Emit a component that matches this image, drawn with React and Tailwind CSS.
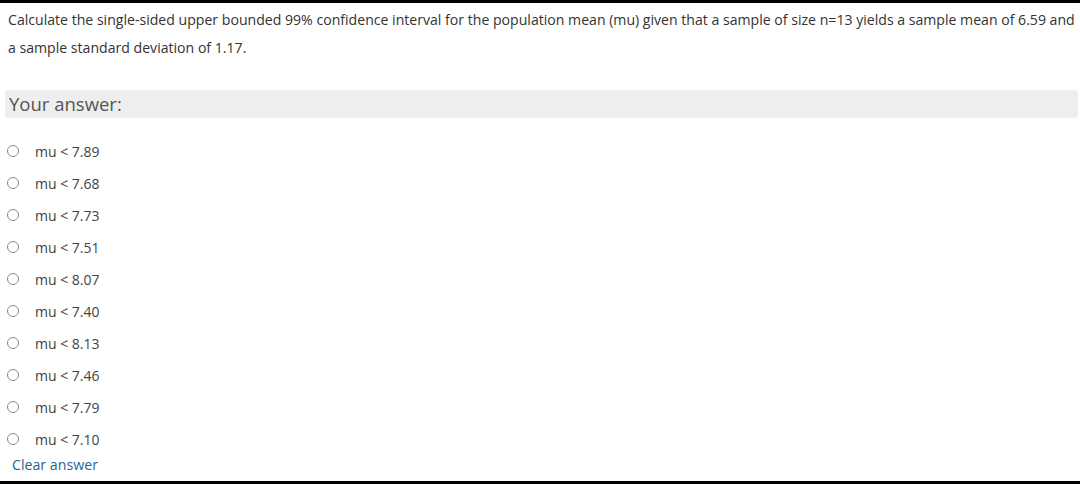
export default function App() {
  const opts = ["7.89", "7.68", "7.73", "7.51", "8.07", "7.40", "8.13", "7.46", "7.79", "7.10"];
  return (
    <div className="w-[1080px] h-[484px] bg-white flex flex-col text-[#333]" style={{ fontFamily: '"Open Sans", sans-serif' }}>
      <div className="h-[3px] bg-black shrink-0" />
      <div className="flex-1 flex flex-col">
        <p className="pl-[8px] pr-[2px] pt-[3px] text-[14.1px] leading-[28px] text-[#333]">
          Calculate the single-sided upper bounded 99% confidence interval for the population mean (mu) given that a sample of size n=13 yields a sample mean of 6.59 and a sample standard deviation of 1.17.
        </p>
        <div className="ml-[5px] mr-[2px] mt-[28px] h-[28px] rounded-[3px] bg-[#eeeeee] flex items-center px-[4px] text-[18.5px] text-[#555]">
          Your answer:
        </div>
        <div className="mt-[17px] flex flex-col">
          {opts.map((o) => (
            <div key={o} className="h-[32px] flex items-center">
              <span className="ml-[7px] w-[12px] h-[12px] rounded-full border-[1.5px] border-[#8a8a8a] bg-white" />
              <span className="ml-[16px] text-[14px] text-[#444]">mu &lt; {o}</span>
            </div>
          ))}
        </div>
        <div className="px-[12px] h-[20px] flex items-center text-[14.2px] text-[#2a6496]">Clear answer</div>
      </div>
      <div className="h-[3px] bg-black shrink-0" />
    </div>
  );
}
